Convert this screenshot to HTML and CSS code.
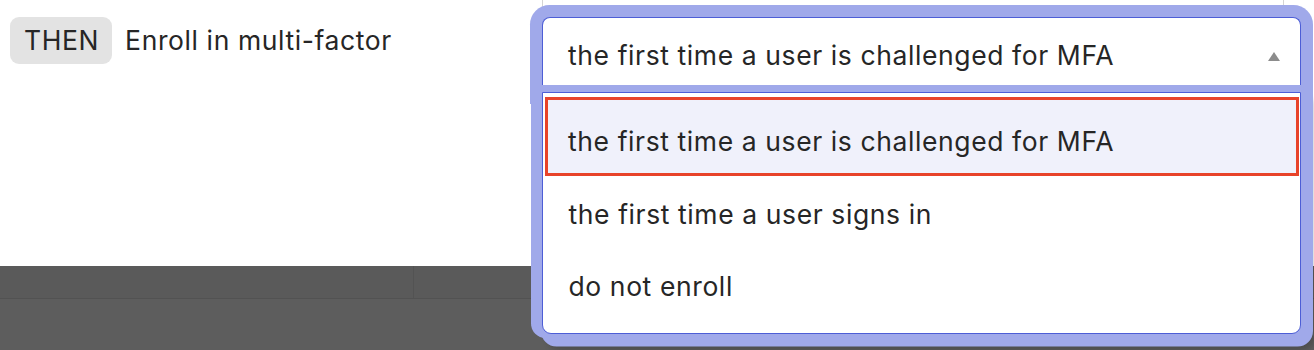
FILE: index.html
```html
<!DOCTYPE html>
<html lang="en">
<head>
<meta charset="utf-8">
<title>Enroll in multi-factor</title>
<link rel="stylesheet" href="styles.css">
</head>
<body>
<div class="page">
  <div class="rule-row">
    <div class="cond">
      <span class="badge">THEN</span>
      <span class="label">Enroll in multi-factor</span>
    </div>
    <div class="field-cell">
      <div class="field">
        <div class="select">
          <span class="select-value">the first time a user is challenged for MFA</span>
          <svg class="caret" width="12" height="9" viewBox="0 0 12 9"><polygon points="6,0 12,9 0,9" fill="#8c8c8c"/></svg>
        </div>
        <div class="listbox">
          <div class="option option-active">the first time a user is challenged for MFA</div>
          <div class="option option-second">the first time a user signs in</div>
          <div class="option">do not enroll</div>
        </div>
      </div>
    </div>
    <div class="tail-cell"></div>
  </div>
  <div class="footer">
    <div class="footer-strip">
      <div class="footer-col footer-col-a"></div>
      <div class="footer-col footer-col-b"></div>
    </div>
    <div class="footer-rest"></div>
  </div>
</div>
</body>
</html>
```

FILE: styles.css
```css
* { box-sizing: border-box; }
html, body {
  margin: 0;
  padding: 0;
  background: #ffffff;
  font-family: "Inter", "Noto Sans", "Liberation Sans", sans-serif;
  color: #262626;
  overflow: hidden;
}
.page {
  width: 1314px;
  height: 350px;
  display: flex;
  flex-direction: column;
}
.rule-row {
  height: 266px;
  display: flex;
  position: relative;
  z-index: 2;
  background: #ffffff;
  font-size: 26.5px;
  letter-spacing: 0.6px;
}
.cond {
  width: 543px;
  flex: none;
  display: flex;
  align-items: flex-start;
  gap: 13px;
  padding: 17px 0 0 10px;
  border-right: 1px solid #d4d4d4;
}
.badge {
  height: 47px;
  line-height: 47px;
  padding: 0 13px 0 14px;
  background: #e3e3e3;
  border-radius: 9px;
  color: #262626;
}
.label {
  line-height: 47px;
}
.field-cell {
  width: 740px;
  flex: none;
  padding-top: 17px;
  position: relative;
}
.tail-cell {
  flex: 1;
  border-left: 1px solid #d4d4d4;
}
.field {
  position: relative;
  width: 759px;
  margin-left: -1px;
}
.select {
  height: 75px;
  display: flex;
  align-items: center;
  justify-content: space-between;
  padding: 0 20px 0 25px;
  background: #ffffff;
  border: 1.5px solid #4d5ed6;
  border-bottom: none;
  border-radius: 8px 8px 0 0;
  box-shadow: 0 0 0 12px #a0a9ea;
  position: relative;
  z-index: 1;
}
.caret { display: block; margin-top: 2px; }
.listbox {
  position: absolute;
  left: 0;
  top: 75px;
  width: 759px;
  height: 242px;
  background: #ffffff;
  border: 1.5px solid #4d5ed6;
  border-radius: 0 0 9px 9px;
  padding: 3.5px 1.5px 0;
  z-index: 2;
  box-shadow:
    -5.5px -1.5px 0 5.5px #a0a9ea,
    5.5px 6px 0 6.5px #a0a9ea,
    10px 12px 6px 4px rgba(0, 0, 0, 0.18);
}
.option {
  height: 72px;
  display: flex;
  align-items: center;
  padding-left: 24px;
  color: #262626;
}
.option-active {
  height: 79px;
  padding: 10px 0 0 20.5px;
  border: 3.5px solid #e8432a;
  background: #f0f1fb;
}
.option-second {
  margin-top: 2px;
}
.footer {
  flex: 1;
  display: flex;
  flex-direction: column;
  background: #5d5d5d;
}
.footer-strip {
  height: 33px;
  display: flex;
  background: #5a5a5a;
  border-bottom: 1px solid #525252;
}
.footer-col-a {
  width: 414px;
  border-right: 1px solid #535353;
}
.footer-col-b { flex: 1; }
.footer-rest { flex: 1; }
```
